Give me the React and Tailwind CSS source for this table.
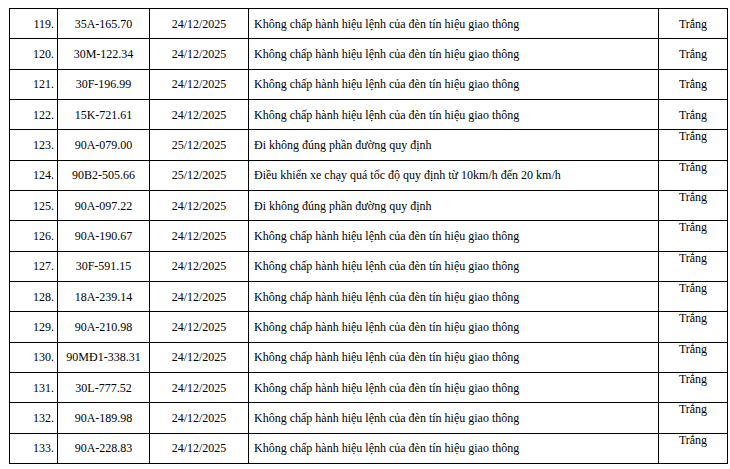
const ROWS = [
  ["119.", "35A-165.70", "24/12/2025", "Không chấp hành hiệu lệnh của đèn tín hiệu giao thông"],
  ["120.", "30M-122.34", "24/12/2025", "Không chấp hành hiệu lệnh của đèn tín hiệu giao thông"],
  ["121.", "30F-196.99", "24/12/2025", "Không chấp hành hiệu lệnh của đèn tín hiệu giao thông"],
  ["122.", "15K-721.61", "24/12/2025", "Không chấp hành hiệu lệnh của đèn tín hiệu giao thông"],
  ["123.", "90A-079.00", "25/12/2025", "Đi không đúng phần đường quy định"],
  ["124.", "90B2-505.66", "25/12/2025", "Điều khiển xe chạy quá tốc độ quy định từ 10km/h đến 20 km/h"],
  ["125.", "90A-097.22", "24/12/2025", "Đi không đúng phần đường quy định"],
  ["126.", "90A-190.67", "24/12/2025", "Không chấp hành hiệu lệnh của đèn tín hiệu giao thông"],
  ["127.", "30F-591.15", "24/12/2025", "Không chấp hành hiệu lệnh của đèn tín hiệu giao thông"],
  ["128.", "18A-239.14", "24/12/2025", "Không chấp hành hiệu lệnh của đèn tín hiệu giao thông"],
  ["129.", "90A-210.98", "24/12/2025", "Không chấp hành hiệu lệnh của đèn tín hiệu giao thông"],
  ["130.", "90MĐ1-338.31", "24/12/2025", "Không chấp hành hiệu lệnh của đèn tín hiệu giao thông"],
  ["131.", "30L-777.52", "24/12/2025", "Không chấp hành hiệu lệnh của đèn tín hiệu giao thông"],
  ["132.", "90A-189.98", "24/12/2025", "Không chấp hành hiệu lệnh của đèn tín hiệu giao thông"],
  ["133.", "90A-228.83", "24/12/2025", "Không chấp hành hiệu lệnh của đèn tín hiệu giao thông"],
];

export default function App() {
  return (
    <div
      className="h-[469px] w-[730px] bg-white pl-[9px] pt-[8px] text-black"
      style={{ fontFamily: '"Liberation Serif", "Times New Roman", serif' }}
    >
      <table className="w-[718px] table-fixed border-collapse text-[12px]">
        <colgroup>
          <col className="w-[48px]" />
          <col className="w-[92px]" />
          <col className="w-[99px]" />
          <col className="w-[410px]" />
          <col className="w-[69px]" />
        </colgroup>
        <tbody>
          {ROWS.map((r, i) => (
            <tr key={r[0]} className="h-[30.33px]">
              <td className="border border-black pr-[3px] text-right align-middle">{r[0]}</td>
              <td className="border border-black text-center align-middle">{r[1]}</td>
              <td className="border border-black text-center align-middle">{r[2]}</td>
              <td className="border border-black pl-[5px] text-left align-middle">{r[3]}</td>
              <td
                className={
                  i < 4
                    ? "border border-black text-center align-middle"
                    : "border border-black pt-0 text-center align-top leading-[13px]"
                }
              >
                Trắng
              </td>
            </tr>
          ))}
        </tbody>
      </table>
    </div>
  );
}
